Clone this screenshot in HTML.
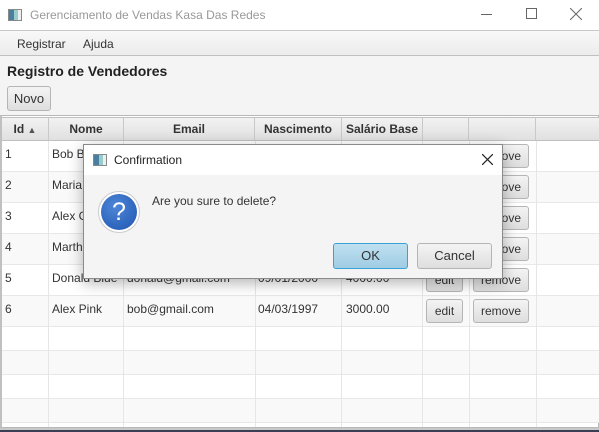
<!DOCTYPE html>
<html><head><meta charset="utf-8"><style>
*{margin:0;padding:0;box-sizing:border-box}
body{width:599px;height:432px;overflow:hidden;background:#f4f4f4;font-family:"Liberation Sans",sans-serif;font-size:12px;color:#333;position:relative}
.abs{position:absolute}
.title{left:0;top:0;width:599px;height:30px;background:#fff;}
.menu{left:0;top:30px;width:599px;height:26px;background:linear-gradient(#f8f8f8,#ececec);border-top:1px solid #c8c8c8;border-bottom:1px solid #c0c0c0}
.btn{position:absolute;border:1px solid #b5b5b5;border-radius:3px;background:linear-gradient(#f4f4f4,#dedede);text-align:center;color:#333;font-size:12px}
.hdr{top:117px;height:24px;background:linear-gradient(#f2f2f2,#e0e0e0);border-right:1px solid #c8c8c8;border-bottom:1px solid #c0c0c0;border-top:1px solid #c0c0c0;font-weight:bold;text-align:center;line-height:22px;color:#333}
.vl{position:absolute;top:141px;width:1px;height:286px;background:#e6e6e6}
.row{position:absolute;left:2px;width:597px;border-bottom:1px solid #e8e8e8}
.c{position:absolute;font-size:12px;color:#333}
</style></head><body>
<div class="abs title">
 <div class="abs" style="left:8px;top:9px;width:14px;height:12px;border:1px solid #888;background:linear-gradient(90deg,#4a7fa0 0 40%,#9cc 40% 75%,#eee 75%)"></div>
 <div class="abs" style="left:30px;top:8px;color:#999;font-size:12px">Gerenciamento de Vendas Kasa Das Redes</div>
 <div class="abs" style="left:481px;top:14px;width:11px;height:1px;background:#666"></div>
 <div class="abs" style="left:526px;top:8px;width:11px;height:11px;border:1px solid #666"></div>
 <svg class="abs" style="left:570px;top:8px" width="12" height="12"><path d="M0 0L12 12M12 0L0 12" stroke="#666" stroke-width="1"/></svg>
</div>
<div class="abs menu"><span class="abs" style="left:17px;top:6px">Registrar</span><span class="abs" style="left:83px;top:6px">Ajuda</span></div>
<div class="abs" style="left:7px;top:63px;font-weight:bold;font-size:14px;color:#222">Registro de Vendedores</div>
<div class="btn" style="left:7px;top:86px;width:44px;height:25px;line-height:23px;font-size:13px">Novo</div>
<div class="abs" style="left:0;top:115px;width:599px;height:313px;background:#fff;border:1px solid #b8b8b8;border-left:2px solid #c0c0c0"></div>
<div class="abs hdr" style="left:2px;width:47px">Id <span style="font-size:9px;color:#555">&#9650;</span></div>
<div class="abs hdr" style="left:49px;width:75px">Nome</div>
<div class="abs hdr" style="left:124px;width:131px">Email</div>
<div class="abs hdr" style="left:255px;width:87px">Nascimento</div>
<div class="abs hdr" style="left:342px;width:81px">Salário Base</div>
<div class="abs hdr" style="left:423px;width:46px"></div>
<div class="abs hdr" style="left:469px;width:67px"></div>
<div class="abs hdr" style="left:536px;width:63px;border-right:none"></div>
<div class="row" style="top:141px;height:31px;background:#fff"></div>
<div class="row" style="top:172px;height:31px;background:#f9f9f9"></div>
<div class="row" style="top:203px;height:31px;background:#fff"></div>
<div class="row" style="top:234px;height:31px;background:#f9f9f9"></div>
<div class="row" style="top:265px;height:31px;background:#fff"></div>
<div class="row" style="top:296px;height:31px;background:#f9f9f9"></div>
<div class="row" style="top:327px;height:24px;background:#fff"></div>
<div class="row" style="top:351px;height:24px;background:#f9f9f9"></div>
<div class="row" style="top:375px;height:24px;background:#fff"></div>
<div class="row" style="top:399px;height:24px;background:#f9f9f9"></div>
<div class="vl" style="left:48px"></div><div class="vl" style="left:123px"></div><div class="vl" style="left:255px"></div><div class="vl" style="left:341px"></div><div class="vl" style="left:422px"></div><div class="vl" style="left:469px"></div><div class="vl" style="left:536px"></div>
<div class="c" style="left:5px;top:147px">1</div><div class="c" style="left:52px;top:147px">Bob Brown</div>
<div class="c" style="left:5px;top:178px">2</div><div class="c" style="left:52px;top:178px">Maria Green</div>
<div class="c" style="left:5px;top:209px">3</div><div class="c" style="left:52px;top:209px">Alex Grey</div>
<div class="c" style="left:5px;top:240px">4</div><div class="c" style="left:52px;top:240px">Martha Red</div>
<div class="c" style="left:5px;top:271px">5</div><div class="c" style="left:52px;top:271px">Donald Blue</div><div class="c" style="left:127px;top:271px">donald@gmail.com</div><div class="c" style="left:258px;top:271px">09/01/2000</div><div class="c" style="left:346px;top:271px">4000.00</div>
<div class="c" style="left:5px;top:302px">6</div><div class="c" style="left:52px;top:302px">Alex Pink</div><div class="c" style="left:127px;top:302px">bob@gmail.com</div><div class="c" style="left:258px;top:302px">04/03/1997</div><div class="c" style="left:346px;top:302px">3000.00</div>
<div class="btn" style="left:426px;top:144px;width:37px;height:24px;line-height:22px">edit</div><div class="btn" style="left:473px;top:144px;width:56px;height:24px;line-height:22px">remove</div>
<div class="btn" style="left:426px;top:175px;width:37px;height:24px;line-height:22px">edit</div><div class="btn" style="left:473px;top:175px;width:56px;height:24px;line-height:22px">remove</div>
<div class="btn" style="left:426px;top:206px;width:37px;height:24px;line-height:22px">edit</div><div class="btn" style="left:473px;top:206px;width:56px;height:24px;line-height:22px">remove</div>
<div class="btn" style="left:426px;top:237px;width:37px;height:24px;line-height:22px">edit</div><div class="btn" style="left:473px;top:237px;width:56px;height:24px;line-height:22px">remove</div>
<div class="btn" style="left:426px;top:268px;width:37px;height:24px;line-height:22px">edit</div><div class="btn" style="left:473px;top:268px;width:56px;height:24px;line-height:22px">remove</div>
<div class="btn" style="left:426px;top:299px;width:37px;height:24px;line-height:22px">edit</div><div class="btn" style="left:473px;top:299px;width:56px;height:24px;line-height:22px">remove</div>
<div class="abs" style="left:0;top:428px;width:599px;height:4px;background:linear-gradient(#c8c8c8 0 2px,#3a3f55 2px)"></div>
<!-- dialog -->
<div class="abs" style="left:83px;top:144px;width:420px;height:135px;background:#f4f4f4;border:1px solid #8a8a8a;box-shadow:0 4px 14px rgba(0,0,0,0.3)">
 <div class="abs" style="left:0;top:0;width:418px;height:30px;background:#fff"></div>
 <div class="abs" style="left:9px;top:9px;width:14px;height:12px;border:1px solid #888;background:linear-gradient(90deg,#4a7fa0 0 40%,#9cc 40% 75%,#eee 75%)"></div>
 <div class="abs" style="left:30px;top:8px;font-size:12px;color:#222">Confirmation</div>
 <svg class="abs" style="left:398px;top:9px" width="11" height="11"><path d="M0 0L11 11M11 0L0 11" stroke="#222" stroke-width="1.2"/></svg>
 <div class="abs" style="left:14px;top:46px;width:42px;height:42px;border-radius:50%;background:#fff;border:1px solid #ccc"></div>
 <div class="abs" style="left:17px;top:49px;width:36px;height:36px;border-radius:50%;background:radial-gradient(circle at 40% 35%,#4d86d8,#1f55b0);color:#fff;font-size:25px;text-align:center;line-height:36px">?</div>
 <div class="abs" style="left:68px;top:49px;font-size:12px;color:#333">Are you sure to delete?</div>
 <div class="abs" style="left:249px;top:98px;width:75px;height:26px;border:1px solid #3aa0d8;border-radius:3px;background:linear-gradient(#bfe0f0,#9fcce4);text-align:center;line-height:24px;font-size:13px">OK</div>
 <div class="btn" style="left:333px;top:98px;width:75px;height:26px;line-height:24px;font-size:13px">Cancel</div>
</div>
</body></html>
